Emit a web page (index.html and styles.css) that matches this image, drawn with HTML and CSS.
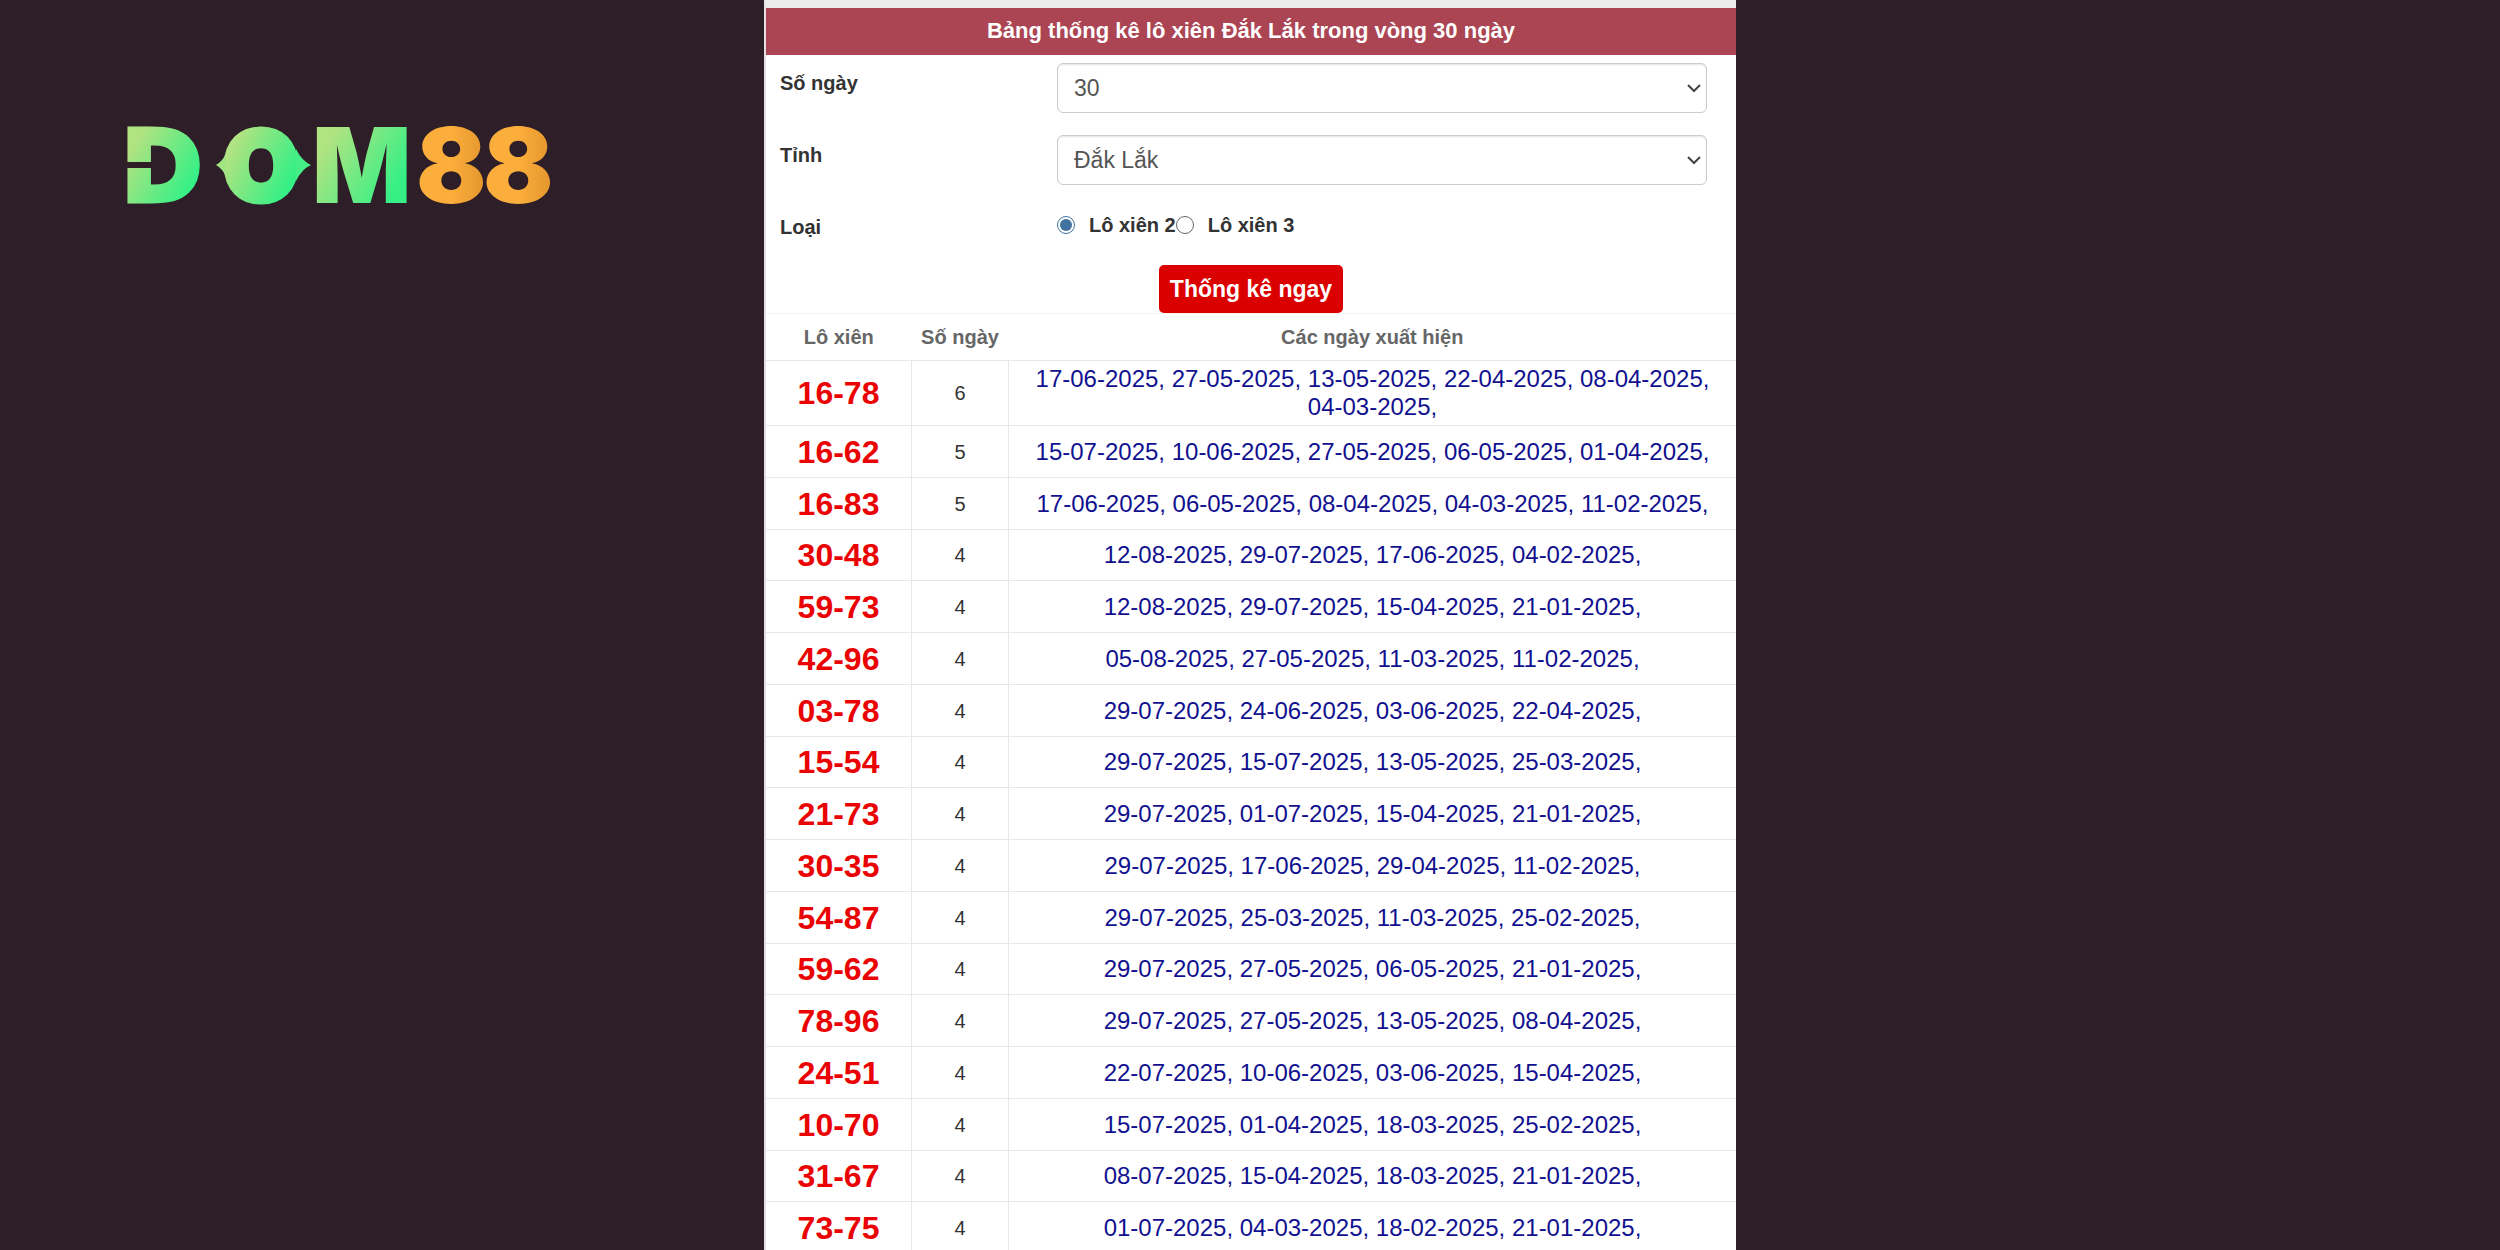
FILE: index.html
```html
<!DOCTYPE html>
<html lang="vi">
<head>
	<meta charset="UTF-8">
	<meta name="viewport" content="width=device-width, initial-scale=1">
	<title>Thống kê lô xiên Đắk Lắk</title>
	<link rel="stylesheet" href="styles.css">
</head>
<body>
	<div class="page">
		<header class="side">
			<a class="logo" href="#">
				<svg viewBox="0 0 426 77" role="img">
					<defs>
						<linearGradient id="green" x1="0" y1="0.1" x2="1" y2="0.9">
							<stop offset="0.2" stop-color="#b0e381"/>
							<stop offset="0.8" stop-color="#36f086"/>
						</linearGradient>
						<linearGradient id="orange" x1="0" y1="0" x2="1" y2="0">
							<stop offset="0.5" stop-color="#fbae3b"/>
							<stop offset="1" stop-color="#e2942d"/>
						</linearGradient>
					</defs>
					<g class="wide" fill="url(#green)" stroke="url(#green)">
						<text x="-4" y="74">D</text>
						<text x="98" y="74">O</text>
					</g>
					<text fill="url(#green)" x="187" y="76">M</text>
					<g fill="url(#orange)">
						<text x="291" y="76">8</text>
						<text x="358" y="76">8</text>
					</g>
					<rect class="slit" x="-3" y="35" width="30" height="6"/>
					<path fill="#a0e582" d="M101 26Q98 34 91 38Q98 42 101 50z"/>
					<path fill="#45ee86" d="M171 22Q177 34 186 38Q177 42 171 54z"/>
				</svg>
			</a>
		</header>

		<main class="panel">
			<h1 class="title">Bảng thống kê lô xiên Đắk Lắk trong vòng 30 ngày</h1>
			<form class="form">
				<div class="row">
					<label class="name" for="days">Số ngày</label>
					<div class="pick">
						<select id="days"><option>30</option></select>
						<svg class="arrow" viewBox="0 0 14 10"><path d="M1 2l6 6 6-6"/></svg>
					</div>
				</div>
				<div class="row">
					<label class="name" for="province">Tỉnh</label>
					<div class="pick">
						<select id="province"><option>Đắk Lắk</option></select>
						<svg class="arrow" viewBox="0 0 14 10"><path d="M1 2l6 6 6-6"/></svg>
					</div>
				</div>
				<div class="row" role="radiogroup" aria-labelledby="type">
					<span class="name" id="type">Loại</span>
					<div class="radios">
						<label><input type="radio" name="type" checked>Lô xiên 2</label>
						<label><input type="radio" name="type">Lô xiên 3</label>
					</div>
				</div>
				<button class="btn" type="button">Thống kê ngay</button>
			</form>

			<table class="result">
				<thead>
					<tr><th class="c1">Lô xiên</th><th class="c2">Số ngày</th><th>Các ngày xuất hiện</th></tr>
				</thead>
				<tbody>
					<tr><td class="pair">16-78</td><td>6</td><td class="dates">17-06-2025, 27-05-2025, 13-05-2025, 22-04-2025, 08-04-2025, 04-03-2025,</td></tr>
					<tr><td class="pair">16-62</td><td>5</td><td class="dates">15-07-2025, 10-06-2025, 27-05-2025, 06-05-2025, 01-04-2025,</td></tr>
					<tr><td class="pair">16-83</td><td>5</td><td class="dates">17-06-2025, 06-05-2025, 08-04-2025, 04-03-2025, 11-02-2025,</td></tr>
					<tr><td class="pair">30-48</td><td>4</td><td class="dates">12-08-2025, 29-07-2025, 17-06-2025, 04-02-2025,</td></tr>
					<tr><td class="pair">59-73</td><td>4</td><td class="dates">12-08-2025, 29-07-2025, 15-04-2025, 21-01-2025,</td></tr>
					<tr><td class="pair">42-96</td><td>4</td><td class="dates">05-08-2025, 27-05-2025, 11-03-2025, 11-02-2025,</td></tr>
					<tr><td class="pair">03-78</td><td>4</td><td class="dates">29-07-2025, 24-06-2025, 03-06-2025, 22-04-2025,</td></tr>
					<tr><td class="pair">15-54</td><td>4</td><td class="dates">29-07-2025, 15-07-2025, 13-05-2025, 25-03-2025,</td></tr>
					<tr><td class="pair">21-73</td><td>4</td><td class="dates">29-07-2025, 01-07-2025, 15-04-2025, 21-01-2025,</td></tr>
					<tr><td class="pair">30-35</td><td>4</td><td class="dates">29-07-2025, 17-06-2025, 29-04-2025, 11-02-2025,</td></tr>
					<tr><td class="pair">54-87</td><td>4</td><td class="dates">29-07-2025, 25-03-2025, 11-03-2025, 25-02-2025,</td></tr>
					<tr><td class="pair">59-62</td><td>4</td><td class="dates">29-07-2025, 27-05-2025, 06-05-2025, 21-01-2025,</td></tr>
					<tr><td class="pair">78-96</td><td>4</td><td class="dates">29-07-2025, 27-05-2025, 13-05-2025, 08-04-2025,</td></tr>
					<tr><td class="pair">24-51</td><td>4</td><td class="dates">22-07-2025, 10-06-2025, 03-06-2025, 15-04-2025,</td></tr>
					<tr><td class="pair">10-70</td><td>4</td><td class="dates">15-07-2025, 01-04-2025, 18-03-2025, 25-02-2025,</td></tr>
					<tr><td class="pair">31-67</td><td>4</td><td class="dates">08-07-2025, 15-04-2025, 18-03-2025, 21-01-2025,</td></tr>
					<tr><td class="pair">73-75</td><td>4</td><td class="dates">01-07-2025, 04-03-2025, 18-02-2025, 21-01-2025,</td></tr>
				</tbody>
			</table>
		</main>
	</div>
</body>
</html>
```
FILE: styles.css
```css
*{margin: 0;padding: 0;box-sizing: border-box;}
html{scrollbar-width: none;}
body{background: #2d1e27;color: #333;font: 20px/28px "Liberation Sans",Arial,sans-serif;}
.page{display: grid;grid-template-columns: 1fr minmax(0,972px) 1fr;}

.side{padding: 127px 0 0 125px;}
.logo{display: block;max-width: 426px;}
.logo svg{display: block;width: 100%;overflow: visible;}
.logo text{font: 900 104px Inter,sans-serif;}
.logo .wide text{font: bold 98px "DejaVu Sans",sans-serif;stroke-width: 5;}
.logo .wide text:last-child{font: 900 98px Inter,sans-serif;}
.slit{fill: #2d1e27;}

.panel{background: #fff;border-top: 8px solid #ececec;border-left: 2px solid #e6dfe3;}
.title{padding: 9px 0 10px;background: #ab4453;color: #fff;font-size: 22px;line-height: 28px;text-align: center;}

.form{padding-top: 8px;}
.row{display: grid;grid-template-columns: 30% 67%;height: 72px;}
.name{padding: 6px 14px;font-weight: bold;}
.pick{display: grid;align-self: start;}
.pick select,.arrow{grid-area: 1/1;}
.pick select{appearance: none;width: 100%;height: 50px;padding: 0 16px;border: 1px solid #ccc;border-radius: 6px;background: #fff;box-shadow: inset 0 1px 2px rgba(0,0,0,.1);color: #555;font: 23px "Liberation Sans",Arial,sans-serif;}
.arrow{place-self: center end;width: 14px;height: 10px;margin-right: 6px;fill: none;stroke: #444;stroke-width: 2;pointer-events: none;}
.radios{display: flex;align-items: flex-start;padding-top: 4px;font-weight: bold;}
.radios label{display: flex;align-items: center;}
.radios input{appearance: none;width: 18px;height: 18px;margin-right: 14px;border: 1px solid #666;border-radius: 50%;background: #fff;}
.radios input:checked{padding: 2px;border-color: #41719f;background: #41719f content-box;}
.btn{display: block;margin: -14px auto 0;padding: 0 11px;height: 48px;border: 0;border-radius: 5px;background: #db0000;color: #fff;font: bold 23px "Liberation Sans",Arial,sans-serif;}

.result{width: 100%;table-layout: fixed;border-collapse: collapse;text-align: center;}
.c1{width: 15%;}
.c2{width: 10%;}
.result th{height: 47px;border-top: 1px solid #f3f3f3;color: #666;}
.result td{height: 52px;padding: 4px 8px;border: 1px solid #e8e8e8;border-width: 1px 0 1px 1px;}
.result tr:nth-child(4n) td{height: 51px;}
.result td:first-child{border-left: 0;}
.result .pair{color: #ea0303;font-size: 32px;font-weight: bold;}
.result .dates{color: #11118f;font-size: 24px;}
```
